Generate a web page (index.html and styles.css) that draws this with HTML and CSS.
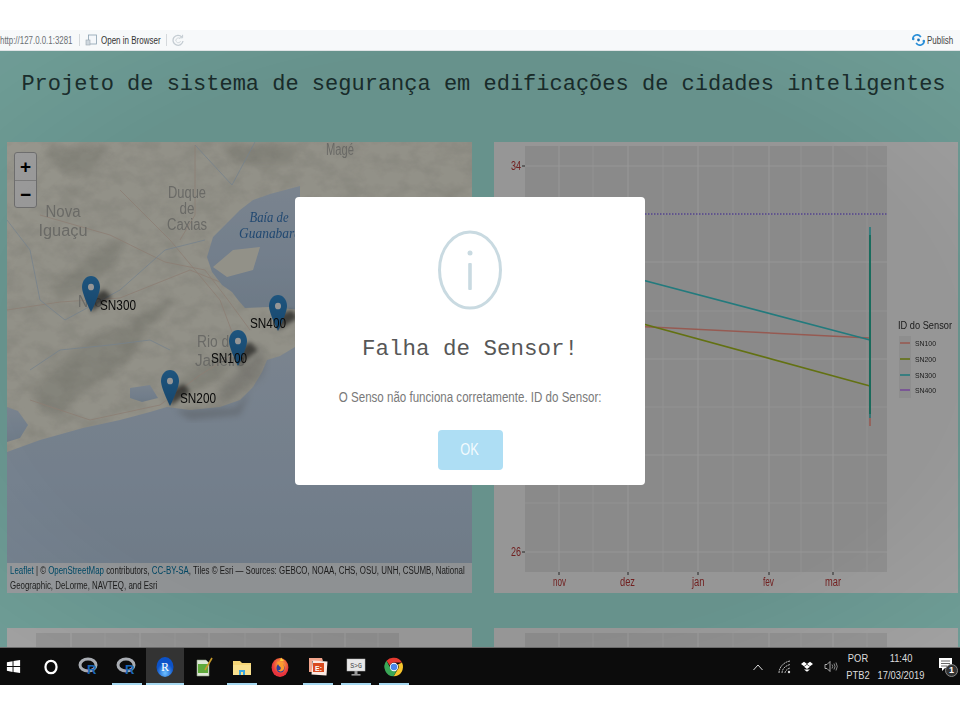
FILE: index.html
```html
<!DOCTYPE html>
<html lang="pt">
<head>
<meta charset="utf-8">
<title>Projeto de sistema de segurança</title>
<link rel="stylesheet" href="styles.css">
</head>
<body>
<div class="topgap"></div>
<div class="toolbar">
  <span class="tb-url">http://127.0.0.1:3281</span>
  <span class="tb-sep"></span>
  <svg class="tb-icon" viewBox="0 0 12 12"><rect x="3.5" y="1" width="8" height="9" fill="#f4f7fa" stroke="#8aa0b0" stroke-width=".8"/><rect x="1" y="6" width="4" height="5" fill="#cfd8de" stroke="#9aa6ae" stroke-width=".6"/></svg>
  <span class="tb-open">Open in Browser</span>
  <span class="tb-sep"></span>
  <svg class="tb-icon" viewBox="0 0 12 12"><path d="M9.8 3A5 5 0 1 0 11 7" fill="none" stroke="#c4ccd2" stroke-width="1.3"/><path d="M8 4.7A2.4 2.4 0 1 0 8.6 7" fill="none" stroke="#d4dade" stroke-width="1"/><path d="M10.6 .8V3.8H7.6" fill="none" stroke="#c4ccd2" stroke-width="1"/></svg>
  <span class="tb-fill"></span>
  <svg class="tb-publish-icon" viewBox="0 0 14 12"><path d="M1 5.5A4.5 4.5 0 0 1 9.5 3" fill="none" stroke="#2a8fd8" stroke-width="1.8"/><path d="M13 6.5A4.5 4.5 0 0 1 4.5 9" fill="none" stroke="#2a8fd8" stroke-width="1.8"/><circle cx="7" cy="6" r="1.5" fill="#1c6fb0"/><circle cx="1.4" cy="5" r="1.3" fill="#2a8fd8"/><circle cx="12.6" cy="7" r="1.3" fill="#2a8fd8"/></svg>
  <span class="tb-publish">Publish</span>
</div>

<main class="app">
  <h1 class="title">Projeto de sistema de segurança em edificações de cidades inteligentes</h1>
  <div class="panels">
    <section class="panel map">
      <svg class="map-art" viewBox="7 142 465 451" preserveAspectRatio="none">
        <defs>
          <filter id="noise" x="0" y="0" width="100%" height="100%"><feTurbulence type="fractalNoise" baseFrequency=".05 .07" numOctaves="4" seed="7"/><feColorMatrix values="0 0 0 0 .3  0 0 0 0 .3  0 0 0 0 .25  1.4 0 0 0 -.5"/></filter>
          <filter id="blur3"><feGaussianBlur stdDeviation="3"/></filter>
          <filter id="blur6"><feGaussianBlur stdDeviation="5"/></filter>
          <filter id="blur2"><feGaussianBlur stdDeviation="2"/></filter>
          <linearGradient id="seaGrad" x1="0" y1="0" x2="0" y2="1"><stop offset="0" stop-color="#d0e0f2"/><stop offset=".55" stop-color="#c4d8ee"/><stop offset="1" stop-color="#bacfe4"/></linearGradient>
          <linearGradient id="pin" x1="0" y1="0" x2="0" y2="1"><stop offset="0" stop-color="#3490d6"/><stop offset="1" stop-color="#2878b8"/></linearGradient>
          <symbol id="marker" viewBox="0 0 25 41" preserveAspectRatio="none"><path d="M12.5 0C5.6 0 0 5.6 0 12.5 0 21 12.5 41 12.5 41S25 21 25 12.5C25 5.6 19.4 0 12.5 0z" fill="url(#pin)"/><ellipse cx="12.5" cy="12.5" rx="4.2" ry="3.8" fill="#fff"/></symbol>
        </defs>
        <rect class="land" x="7" y="142" width="465" height="451"/>
        <g class="ridges" filter="url(#blur3)">
          <path d="M50 290L90 255 125 235 115 265 85 290 60 300Z"/>
          <path d="M30 395L70 350 120 325 150 330 125 365 80 395 55 420Z"/>
          <path d="M130 320L175 295 165 315 135 335Z"/>
          <path d="M170 385L215 355 240 345 225 375 190 395Z"/>
          <path d="M45 150L110 145 90 175 60 170Z"/>
          <path d="M220 145L300 146 290 165 240 165Z"/>
        </g>
        <rect x="7" y="142" width="465" height="451" filter="url(#noise)" opacity=".24"/>
        <g class="roads">
          <path d="M7 310L60 302 120 298 190 270 240 290 262 305"/>
          <path d="M40 215L110 235 165 262 205 270 228 300 250 330"/>
          <path d="M120 190L170 240 220 300 235 340"/>
          <path d="M195 145V215L180 240"/>
          <path d="M30 400L90 420 160 405 200 375 240 350"/>
        </g>
        <g class="rivers">
          <path d="M7 220L30 250 40 300 65 320 120 290 165 250 205 240"/>
          <path d="M195 145L232 185 255 142"/>
          <path d="M30 370L60 350 110 345 150 340 170 350"/>
        </g>
        <path class="sea" d="M7 452L40 440 83 428 120 420 150 412 167 407 190 410 220 407 240 400 253 387 262 372 267 360 280 356 295 347H472V593H7Z"/>
        <path class="sea" d="M207 257L213 237 228 222 240 210 253 200 270 194 300 186V310L270 307 245 308 238 300 232 292 222 285 212 272Z"/>
        <path class="land" d="M213 267L233 250 260 247 253 270 227 277Z"/>
        <path class="sea" d="M7 407L18 411 28 425 20 438 7 442Z"/>
        <path class="sea" d="M130 388L150 385 158 398 142 402 130 398Z"/>
        <path d="M238 370L265 345 262 375 235 395 210 405 225 385Z" class="shade" filter="url(#blur6)"/>
        <path d="M175 410L235 408 250 392 240 415 190 420Z" class="shade" filter="url(#blur3)"/>
        <text class="m-city" x="340" y="155" text-anchor="middle" textLength="28" lengthAdjust="spacingAndGlyphs">Magé</text>
        <text class="m-city" x="187" y="198" text-anchor="middle" textLength="38" lengthAdjust="spacingAndGlyphs">Duque</text>
        <text class="m-city" x="187" y="214" text-anchor="middle" textLength="15" lengthAdjust="spacingAndGlyphs">de</text>
        <text class="m-city" x="187" y="230" text-anchor="middle" textLength="40" lengthAdjust="spacingAndGlyphs">Caxias</text>
        <text class="m-city" x="63" y="217" text-anchor="middle" textLength="35" lengthAdjust="spacingAndGlyphs">Nova</text>
        <text class="m-city" x="63" y="236" text-anchor="middle" textLength="49" lengthAdjust="spacingAndGlyphs">Iguaçu</text>
        <text class="m-water" x="269" y="222" text-anchor="middle" textLength="39" lengthAdjust="spacingAndGlyphs">Baía de</text>
        <text class="m-water" x="270" y="238" text-anchor="middle" textLength="62" lengthAdjust="spacingAndGlyphs">Guanabara</text>
        <text class="m-city" x="197" y="347" textLength="40" lengthAdjust="spacingAndGlyphs">Rio de</text>
        <text class="m-city" x="195" y="366" textLength="50" lengthAdjust="spacingAndGlyphs">Janeiro</text>
        <text class="m-city" x="78" y="307" textLength="24" lengthAdjust="spacingAndGlyphs">Nilo</text>
        <g class="m-shadows" filter="url(#blur2)">
          <path d="M91 312L112 297 104 290 92 296Z"/>
          <path d="M278 330L298 318 292 310 280 314Z"/>
          <path d="M238 366L258 350 250 342 240 348Z"/>
          <path d="M170 406L190 392 184 384 172 390Z"/>
        </g>
        <use href="#marker" x="82" y="276" width="18" height="36"/>
        <use href="#marker" x="269" y="295" width="18" height="36"/>
        <use href="#marker" x="229" y="330" width="18" height="36"/>
        <use href="#marker" x="161" y="370" width="18" height="36"/>
        <text class="m-label" x="100" y="310" textLength="36" lengthAdjust="spacingAndGlyphs">SN300</text>
        <text class="m-label" x="250" y="328" textLength="36" lengthAdjust="spacingAndGlyphs">SN400</text>
        <text class="m-label" x="211" y="363" textLength="36" lengthAdjust="spacingAndGlyphs">SN100</text>
        <text class="m-label" x="180" y="403" textLength="36" lengthAdjust="spacingAndGlyphs">SN200</text>
      </svg>
      <div class="zoom-ctl"><span class="zoom-btn">+</span><span class="zoom-btn">−</span></div>
      <div class="attribution"><div class="attr-text"><a>Leaflet</a> | © <a>OpenStreetMap</a> contributors, <a>CC-BY-SA</a>, Tiles © Esri — Sources: GEBCO, NOAA, CHS, OSU, UNH, CSUMB, National Geographic, DeLorme, NAVTEQ, and Esri</div></div>
    </section>

    <section class="panel">
      <svg class="chart" viewBox="494 142 464 451">
        <rect class="plot" x="525" y="146" width="362" height="426"/>
        <g class="grid-minor">
          <path d="M525 214H887M525 311H887M525 407H887M525 503H887M593 146V572M663 146V572M733 146V572M801 146V572M867 146V572"/>
        </g>
        <g class="grid-major">
          <path d="M525 166H887M525 262H887M525 359H887M525 455H887M525 552H887M559 146V572M628 146V572M698 146V572M769 146V572M833 146V572"/>
        </g>
        <path class="s400" d="M525 214H887"/>
        <path class="s100" d="M570 323L870 338M870 340V426"/>
        <path class="s200" d="M570 304L870 386"/>
        <path class="s300" d="M570 261L870 340M870 227V418"/>
        <path class="s200v" d="M870 235V414"/>
        <path class="tick" d="M522 166H525M522 552H525M559 572V575M628 572V575M698 572V575M769 572V575M833 572V575"/>
        <text class="axis" x="511" y="170" textLength="10" lengthAdjust="spacingAndGlyphs">34</text>
        <text class="axis" x="511" y="556" textLength="10" lengthAdjust="spacingAndGlyphs">26</text>
        <text class="axis" x="553" y="586" textLength="13" lengthAdjust="spacingAndGlyphs">nov</text>
        <text class="axis" x="620" y="586" textLength="15" lengthAdjust="spacingAndGlyphs">dez</text>
        <text class="axis" x="692" y="586" textLength="12.500" lengthAdjust="spacingAndGlyphs">jan</text>
        <text class="axis" x="763" y="586" textLength="11" lengthAdjust="spacingAndGlyphs">fev</text>
        <text class="axis" x="825" y="586" textLength="16" lengthAdjust="spacingAndGlyphs">mar</text>
        <text class="lg-title" x="898" y="329" textLength="54" lengthAdjust="spacingAndGlyphs">ID do Sensor</text>
        <rect class="lg-key" x="899" y="336" width="12" height="62"/>
        <path class="s100" d="M900 343H910"/>
        <path class="s200" d="M900 359H910"/>
        <path class="s300" d="M900 375H910"/>
        <path class="s400l" d="M900 390H910"/>
        <text class="lg-text" x="915" y="346" textLength="21" lengthAdjust="spacingAndGlyphs">SN100</text>
        <text class="lg-text" x="915" y="362" textLength="21" lengthAdjust="spacingAndGlyphs">SN200</text>
        <text class="lg-text" x="915" y="378" textLength="21" lengthAdjust="spacingAndGlyphs">SN300</text>
        <text class="lg-text" x="915" y="393" textLength="21" lengthAdjust="spacingAndGlyphs">SN400</text>
      </svg>
    </section>

    <section class="panel">
      <svg class="chart" viewBox="7 628 465 60">
        <rect class="plot" x="36" y="633" width="363" height="60"/>
        <path class="grid-major" d="M71 633V693M140 633V693M209 633V693M280 633V693M345 633V693"/>
        <path class="grid-minor" d="M105 633V693M175 633V693M245 633V693M312 633V693M378 633V693"/>
      </svg>
    </section>
    <section class="panel">
      <svg class="chart" viewBox="494 628 464 60">
        <rect class="plot" x="525" y="633" width="362" height="60"/>
        <path class="grid-major" d="M559 633V693M628 633V693M698 633V693M769 633V693M833 633V693"/>
        <path class="grid-minor" d="M593 633V693M663 633V693M733 633V693M801 633V693M867 633V693"/>
      </svg>
    </section>
  </div>

  <div class="overlay"></div>
  <div class="modal">
    <svg class="modal-icon" viewBox="0 0 66 80">
      <ellipse cx="33" cy="40" rx="30.5" ry="38" fill="none" stroke="#c9dae1" stroke-width="3"/>
      <circle cx="33" cy="23" r="2.5" fill="#c9dae1"/>
      <rect x="31.2" y="33" width="3.6" height="27" rx="1" fill="#c9dae1"/>
    </svg>
    <h2 class="modal-title">Falha de Sensor!</h2>
    <p class="modal-text">O Senso não funciona corretamente. ID do Sensor:</p>
    <button class="modal-btn"><span class="modal-btn-label">OK</span></button>
  </div>
</main>

<footer class="taskbar">
  <div class="tasks">
    <div class="task"><svg class="ti ti-win" viewBox="0 0 18 18"><path d="M2 4.5L8 3.4V8.6H2ZM9 3.2L16 2V8.6H9ZM2 9.5H8V14.7L2 13.6ZM9 9.5H16V16L9 14.9Z" fill="#fff"/></svg></div>
    <div class="task"><svg class="ti" viewBox="0 0 18 18"><ellipse cx="9" cy="9" rx="5" ry="5.6" fill="none" stroke="#fff" stroke-width="2"/></svg></div>
    <div class="task"><svg class="ti" viewBox="0 0 20 20"><ellipse cx="9" cy="8" rx="8" ry="6" fill="none" stroke="#a9adb3" stroke-width="3"/><text class="ti-r" x="8" y="17">R</text></svg></div>
    <div class="task lit"><svg class="ti" viewBox="0 0 20 20"><ellipse cx="9" cy="8" rx="8" ry="6" fill="none" stroke="#a9adb3" stroke-width="3"/><text class="ti-r" x="8" y="17">R</text></svg><i class="bar"></i></div>
    <div class="task active"><svg class="ti" viewBox="0 0 20 20"><defs><radialGradient id="rb" cy=".8"><stop offset="0" stop-color="#6ec0ff"/><stop offset="1" stop-color="#0c52c8"/></radialGradient></defs><ellipse cx="10" cy="10" rx="8.5" ry="10" fill="url(#rb)"/><text class="ti-rs" x="10" y="14" text-anchor="middle">R</text></svg><i class="bar"></i></div>
    <div class="task"><svg class="ti" viewBox="0 0 20 20"><path d="M3 3H12L15 6V19H3Z" fill="#dfe8d8" stroke="#8a9a80" stroke-width=".6"/><rect x="4" y="7" width="10" height="9" fill="#5faa3c"/><path d="M18 1L11 13" stroke="#c79a2a" stroke-width="1.6"/></svg></div>
    <div class="task lit"><svg class="ti" viewBox="0 0 20 20"><path d="M1 4H8L10 6H19V18H1Z" fill="#f5d576"/><rect x="1" y="8" width="18" height="10" fill="#f9e08e"/><path d="M7 13H13V18H11V15H9V18H7Z" fill="#3ba7df"/></svg><i class="bar"></i></div>
    <div class="task"><svg class="ti" viewBox="0 0 20 20"><defs><radialGradient id="ff" cx=".55" cy=".35"><stop offset="0" stop-color="#ffc13a"/><stop offset="1" stop-color="#e8333d"/></radialGradient></defs><ellipse cx="10" cy="10.5" rx="8.4" ry="9.5" fill="url(#ff)"/><ellipse cx="10.5" cy="11" rx="4" ry="4.6" fill="#2a3f9e"/><path d="M7 5C10 4 15 6 14 12 13 15 9 15 8 13 11 14 12 10 9 9Z" fill="#ff9a2c"/><path d="M11 .5L14 4 10 4Z" fill="#ffd23a"/></svg></div>
    <div class="task lit"><svg class="ti" viewBox="0 0 20 20"><path d="M1 1H14L15 4H4V15H1Z" fill="#f3a58c"/><rect x="4" y="4" width="15" height="14" fill="#fbe9e2" transform="rotate(4 11 11)"/><rect x="5" y="6" width="11" height="9" fill="#d94a1e"/><text class="ti-p" x="7" y="13.5">E:</text></svg><i class="bar"></i></div>
    <div class="task lit"><svg class="ti" viewBox="0 0 20 20"><rect x="1" y="2" width="18" height="12" fill="#e8e8e8" stroke="#bbb" stroke-width=".5"/><text class="ti-s" x="10" y="11" text-anchor="middle">S&gt;G</text><rect x="8.5" y="14" width="3" height="3" fill="#9a9a9a"/><rect x="5.5" y="17" width="9" height="1.6" fill="#9a9a9a"/></svg><i class="bar"></i></div>
    <div class="task lit"><svg class="ti" viewBox="0 0 20 20"><path d="M10 0.8A9 9.4 0 0 1 18 5.5H10A4.5 4.5 0 0 0 5.8 8.5L2.5 3.8A9 9.4 0 0 1 10 .8Z" fill="#e53a30"/><path d="M18 5.5A9 9.4 0 0 1 9.6 19.2L13.5 12.8A4.5 4.5 0 0 0 14 7.5Z" fill="#f8c52c"/><path d="M2.5 3.8A9 9.4 0 0 0 9.6 19.2L13 13A4.5 4.5 0 0 1 5.8 10Z" fill="#3aa757"/><circle cx="10" cy="10" r="4.2" fill="#fff"/><circle cx="10" cy="10" r="3.3" fill="#4a86e8"/></svg><i class="bar"></i></div>
  </div>
  <div class="tray">
    <svg class="tray-i caret" viewBox="0 0 12 8"><path d="M1.5 7L6 2 10.500 7" fill="none" stroke="#ddd" stroke-width="1"/></svg>
    <svg class="tray-i wifi" viewBox="0 0 14 14"><path d="M1 13C1 7 6 2 12 1M4 13C4 9 7 6 12 4.500M7 13C7 11 9 9 12 8" fill="none" stroke="#bbb" stroke-width="1" stroke-dasharray="2 .6"/><circle cx="11" cy="12" r="1.200" fill="#ddd"/></svg>
    <svg class="tray-i drop" viewBox="0 0 14 13"><path d="M3.500 .5L7 3 3.500 5.500 0 3ZM10.500 .5L14 3 10.500 5.500 7 3ZM3.500 6.300L7 3.800 10.500 6.300 7 8.800ZM3.500 9.500L7 9.300 10.500 9.500 7 12Z" fill="#fff"/></svg>
    <svg class="tray-i spk" viewBox="0 0 14 12"><path d="M1 4H3L6 1V11L3 8H1Z" fill="none" stroke="#ccc" stroke-width=".8"/><path d="M8 4Q9.500 6 8 8M10 3Q12 6 10 9M12 2Q14.500 6 12 10" fill="none" stroke="#aaa" stroke-width=".8"/></svg>
    <div class="tray-lang"><span>POR</span><span>PTB2</span></div>
    <div class="tray-clock"><span>11:40</span><span>17/03/2019</span></div>
    <div class="tray-note">
      <svg class="note-i" viewBox="0 0 13 14"><path d="M0 0H13V10H6L3 13V10H0Z" fill="#fff"/><path d="M2 3H11M2 5.500H11M2 8H8" stroke="#444" stroke-width=".8"/></svg>
      <span class="note-badge">1</span>
    </div>
  </div>
</footer>
</body>
</html>
```

FILE: styles.css
```css
* { box-sizing: border-box; }
html, body { margin: 0; padding: 0; background: #fff; }
body { width: 960px; height: 720px; overflow: hidden; font-family: "Liberation Sans", Arial, sans-serif; }

.topgap { height: 30px; background: #fff; }

.toolbar {
  height: 21px;
  display: flex;
  align-items: center;
  gap: 4px;
  padding: 0 7px 0 0;
  background: #f7f9fa;
  border-bottom: 1px solid #dfe3e5;
  font-size: 10px;
  color: #333;
}
.tb-url, .tb-open, .tb-publish {
  display: inline-block;
  white-space: nowrap;
  transform-origin: left center;
}
.tb-url { color: #6a6f73; width: 75px; transform: scaleX(.79); }
.tb-sep { width: 1px; height: 12px; background: #d5d9dc; }
.tb-icon { width: 12px; height: 12px; margin-left: 1px; }
.tb-open { width: 61px; transform: scaleX(.8); }
.tb-fill { flex: 1; }
.tb-publish-icon { width: 13px; height: 12px; margin-right: -2px; }
.tb-publish { width: 26px; color: #444; transform: scaleX(.8); }

.app {
  position: relative;
  height: 596px;
  overflow: hidden;
  background: #aff8ee;
}
.title {
  margin: 0;
  height: 91px;
  padding: 20px 0 0 7px;
  text-align: center;
  font-family: "Liberation Mono", "Courier New", monospace;
  font-weight: 400;
  font-size: 22px;
  line-height: 28px;
  color: #2c4a48;
}
.panels {
  display: grid;
  grid-template-columns: 465px 464px;
  column-gap: 22px;
  grid-auto-rows: 451px;
  row-gap: 35px;
  padding: 0 2px 0 7px;
}
.panel { position: relative; background: #fff; overflow: hidden; }
.chart, .map-art { display: block; width: 100%; }
.chart { height: 100%; }
.panels .panel:nth-child(n+3) .chart { height: 60px; }
.map-art { height: 100%; }

.land { fill: #f9f7e8; }
.sea { fill: url(#seaGrad); }
.ridges path { fill: #a5a596; opacity: .28; }
.roads path { fill: none; stroke: #eed6c4; stroke-width: .8; }
.rivers path { fill: none; stroke: #c8dcec; stroke-width: .8; }
.shade { fill: #777; opacity: .3; }
.m-shadows path { fill: #000; opacity: .55; }
.m-city { font-family: "Liberation Sans", sans-serif; font-size: 16px; fill: #b4b4ae; }
.m-water { font-family: "Liberation Serif", serif; font-style: italic; font-size: 15px; fill: #3a7cc0; }
.m-label { font-family: "Liberation Sans", sans-serif; font-size: 14px; fill: #111; }

.zoom-ctl {
  position: absolute;
  left: 7px;
  top: 10px;
  width: 23px;
  display: flex;
  flex-direction: column;
  border: 1px solid #b5b5b5;
  border-radius: 3px;
  background: #fff;
}
.zoom-btn {
  height: 27px;
  text-align: center;
  font-size: 19px;
  font-weight: 700;
  line-height: 27px;
  color: #000;
}
.zoom-btn + .zoom-btn { border-top: 1px solid #ccc; }

.attribution {
  position: absolute;
  left: 0; right: 0; bottom: 0;
  height: 30px;
  padding: 0 3px;
  background: rgba(255,255,255,.8);
  overflow: hidden;
}
.attr-text {
  width: 582px;
  transform: scaleX(.79);
  transform-origin: left top;
  font-size: 10px;
  line-height: 15px;
  color: #333;
}
.attribution a { color: #0078a8; }

.plot { fill: #ebebeb; }
.grid-major path, path.grid-major { fill: none; stroke: #fff; stroke-width: 1.2; }
.grid-minor path, path.grid-minor { fill: none; stroke: #fff; stroke-width: .6; }
.s100, .s200, .s300, .s400, .s400l { fill: none; stroke-width: 1.6; }
.s100 { stroke: #ff9a8c; }
.s200 { stroke: #a8c020; }
.s200v { fill: none; stroke: #20b090; stroke-width: 1.600; }
.s300 { stroke: #3cd0d4; }
.s400 { stroke: #8a70ee; stroke-width: 1.4; stroke-dasharray: 1.500 1.500; }
.s400l { stroke: #c77cff; }
.tick { fill: none; stroke: #444; stroke-width: 1; }
.axis { font-family: "Liberation Sans", sans-serif; font-size: 12px; fill: #c03838; }
.lg-title { font-family: "Liberation Sans", sans-serif; font-size: 10.500px; fill: #333; }
.lg-text { font-family: "Liberation Sans", sans-serif; font-size: 8px; fill: #333; }
.lg-key { fill: #f2f2f2; }

.overlay {
  position: absolute;
  inset: 0;
  background: radial-gradient(ellipse at center, rgba(0,0,0,.41) 0%, rgba(0,0,0,.41) 70%, rgba(0,0,0,.37) 100%);
}
.modal {
  position: absolute;
  left: 295px;
  top: 146px;
  width: 350px;
  height: 288px;
  display: flex;
  flex-direction: column;
  align-items: center;
  background: #fff;
  border-radius: 4px;
  padding-top: 33px;
}
.modal-icon { width: 66px; height: 80px; }
.modal-title {
  margin: 25px 0 0;
  font-family: "Liberation Mono", "Courier New", monospace;
  font-weight: 400;
  font-size: 22.500px;
  line-height: 28px;
  color: #575757;
}
.modal-text {
  margin: 25px 0 0;
  font-size: 14px;
  line-height: 18px;
  white-space: nowrap;
  transform: scaleX(.825);
  color: #797979;
}
.modal-btn {
  margin-top: 24px;
  width: 65px;
  height: 40px;
  border: 0;
  border-radius: 4px;
  background: #aedef4;
  color: #f4fbfe;
  font-family: "Liberation Sans", sans-serif;
  font-size: 16px;
}
.modal-btn-label { display: inline-block; transform: scaleX(.8); }

.taskbar {
  height: 38px;
  display: flex;
  justify-content: space-between;
  background: #0c0c0c;
  border-top: 1px solid #6a6a6a;
  color: #ddd;
}
.tasks { display: flex; margin-left: -6px; }
.task {
  position: relative;
  width: 38.100px;
  height: 37px;
  display: flex;
  align-items: center;
  justify-content: center;
}
.task.active { background: #333; }
.bar {
  position: absolute;
  left: 4px; right: 4px; bottom: 0;
  height: 2px;
  background: #a6d8f0;
}
.task.active .bar { left: 0; right: 0; }
.ti { width: 20px; height: 20px; overflow: visible; }
.ti-win { width: 17px; height: 17px; }
.ti-r { font-family: "Liberation Sans", sans-serif; font-weight: 700; font-size: 13px; fill: #1a66b8; }
.ti-rs { font-family: "Liberation Serif", serif; font-size: 12px; fill: #fff; }
.ti-p { font-family: "Liberation Sans", sans-serif; font-weight: 700; font-size: 7px; fill: #fff; }
.ti-s { font-family: "Liberation Mono", monospace; font-size: 6.500px; fill: #444; }

.tray { display: flex; align-items: center; padding-right: 1px; }
.tray-i { display: block; }
.caret { width: 12px; height: 8px; margin-right: 14px; }
.wifi { width: 14px; height: 14px; margin-right: 9px; }
.drop { width: 12px; height: 12px; margin-right: 11px; }
.spk { width: 14px; height: 13px; margin-right: 7px; }
.tray-lang, .tray-clock {
  display: flex;
  flex-direction: column;
  align-items: center;
  gap: 4px;
  font-size: 11px;
  line-height: 13px;
  color: #ddd;
  transform: scaleX(.85);
}
.tray-lang { width: 26px; margin-right: 5px; }
.tray-clock { width: 50px; margin-right: 13px; }
.tray-note { position: relative; width: 20px; height: 20px; }
.note-i { position: absolute; left: 0; top: 1px; width: 13px; height: 14px; }
.note-badge {
  position: absolute;
  left: 6px; top: 7px;
  width: 13px; height: 13px;
  border-radius: 50%;
  background: #333;
  border: 1px solid #888;
  color: #fff;
  font-size: 9px;
  font-weight: 700;
  line-height: 11px;
  text-align: center;
}
```
